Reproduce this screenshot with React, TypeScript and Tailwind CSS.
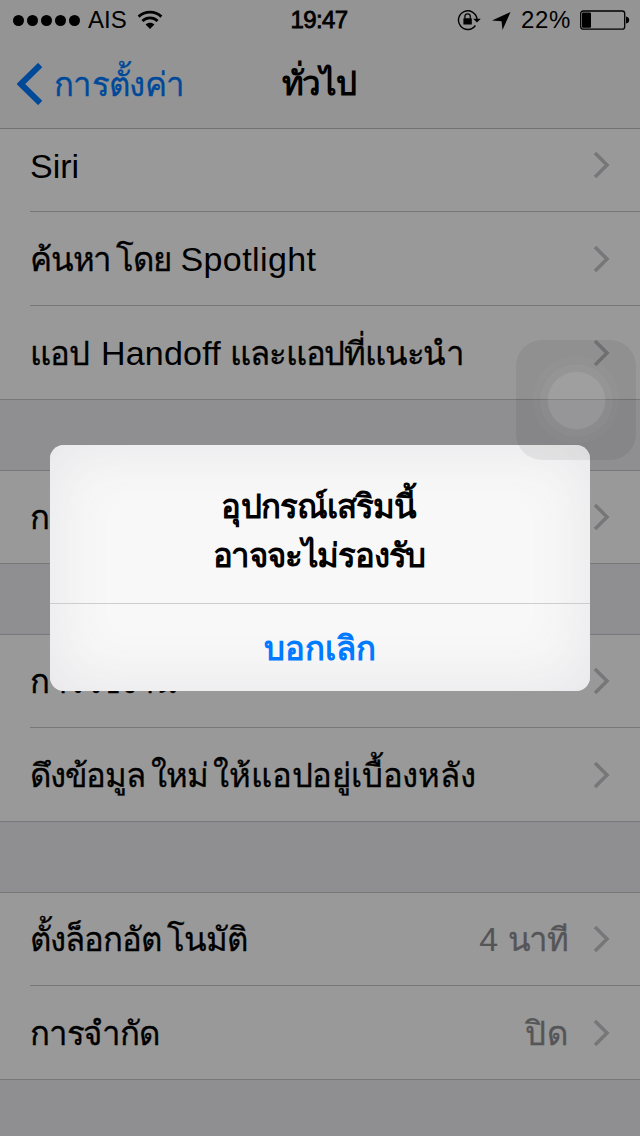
import React from 'react';

interface RowProps {
  label: React.ReactNode;
  value?: React.ReactNode;
  last?: boolean;
  className?: string;
}

// Thai copy runs slightly tighter and heavier than the Latin text next to it.
const Thai: React.FC<{ children: React.ReactNode; className?: string }> = ({ children, className = 'tracking-[-0.9px]' }) => (
  <span className={`text-[33px] [-webkit-text-stroke:0.3px] ${className}`}>{children}</span>
);

const ChevronRight: React.FC = () => (
  <svg width="18" height="28" viewBox="0 0 18 28" fill="none" className="shrink-0">
    <path d="M2 2L14 14L2 26" stroke="#c7c7cc" strokeWidth="3.6" />
  </svg>
);

const Row: React.FC<RowProps> = ({ label, value, last, className = 'h-[94px]' }) => (
  <div className={`flex pl-[30px] ${className}`}>
    <div className={`flex grow items-center pr-[29px] ${last ? '' : 'border-b border-[#c8c7cc]'}`}>
      <span className="grow whitespace-nowrap pt-px text-black">{label}</span>
      {value && <span className="mr-[25px] whitespace-nowrap pt-px text-[#8e8e93]">{value}</span>}
      <ChevronRight />
    </div>
  </div>
);

const Group: React.FC<{ children: React.ReactNode; first?: boolean }> = ({ children, first }) => (
  <section className={`border-b border-[#c8c7cc] bg-white ${first ? '' : 'mt-[70px] border-t'}`}>{children}</section>
);

const StatusBar: React.FC = () => (
  <div className="grid h-10 grid-cols-3 items-center pl-[13px] pr-[10px] text-[24px] leading-10">
    <div className="flex items-center">
      <div className="flex gap-[3px]">
        {[0, 1, 2, 3, 4].map((dot) => (
          <span key={dot} className="size-[11px] rounded-full bg-black" />
        ))}
      </div>
      <span className="ml-[8px] w-[39px]">AIS</span>
      <svg width="26" height="20" viewBox="0 0 26 20" fill="none" className="ml-[10px]">
        <path d="M1.6 6.6C8 .7 18 .7 24.4 6.6" stroke="#000" strokeWidth="2.8" />
        <path d="M5.4 11C9.8 6.9 16.2 6.9 20.6 11" stroke="#000" strokeWidth="2.8" />
        <path d="M13 19L8.600 14.400C11 12.300 15 12.300 17.400 14.400Z" fill="#000" />
      </svg>
    </div>
    <div className="pr-[5px] text-center tracking-[-0.6px] [-webkit-text-stroke:0.8px]">19:47</div>
    <div className="flex items-center justify-end">
      <svg width="24" height="22" viewBox="0 0 24 22" fill="none" className="shrink-0">
        <path d="M18.4 16.5A9.3 9.3 0 1 1 20 10" stroke="#000" strokeWidth="1.4" />
        <path d="M16.2 9.8H23.8L20 13.6Z" fill="#000" />
        <rect x="6.400" y="9.200" width="8.400" height="6.300" rx="0.500" fill="#000" />
        <path d="M7.9 9.5V7.5a2.7 2.7 0 0 1 5.4 0V9.5" stroke="#000" strokeWidth="1.3" />
      </svg>
      <svg width="19" height="18" viewBox="0 0 19 18" className="ml-[11px] mt-[2px] shrink-0">
        <path d="M18.5 0L10.5 18L9.6 9.300L0 8.600Z" fill="#000" />
      </svg>
      <span className="ml-[10px] w-[52px] whitespace-nowrap tracking-[0.6px]">22%</span>
      <svg width="50" height="20" viewBox="0 0 50 20" fill="none" className="ml-[7px] shrink-0">
        <rect x="0.7" y="1" width="44" height="18.2" rx="2.5" stroke="#000" strokeWidth="1.3" />
        <rect x="2" y="2.5" width="9" height="15.2" rx="1" fill="#000" />
        <path d="M46 6.500Q49.200 7 49.200 10T46 13.500Z" fill="#000" />
      </svg>
    </div>
  </div>
);

const Header: React.FC = () => (
  <header className="h-[129px] border-b border-[#bebec1] bg-[#f7f7f8]">
    <StatusBar />
    <div className="grid h-[88px] grid-cols-3 items-center">
      <div className="flex items-center pl-[17px] text-[#007aff]">
        <svg width="26" height="42" viewBox="0 0 26 42" fill="none" className="shrink-0">
          <path d="M23.2 2L3.8 21L23.2 40" stroke="currentColor" strokeWidth="6" />
        </svg>
        <Thai className="ml-[11px] pt-px whitespace-nowrap tracking-[-0.7px]">การตั้งค่า</Thai>
      </div>
      <h1 className="pr-[3px] text-center text-[33px] font-bold tracking-[-1.4px]">ทั่วไป</h1>
    </div>
  </header>
);

const AlertDialog: React.FC = () => (
  <div
    role="alertdialog"
    className="absolute left-[50px] top-[445px] flex h-[246px] w-[540px] flex-col overflow-hidden rounded-[14px] bg-[#f8f8f8] shadow-[inset_0_0_60px_4px_#e6e6e9]"
  >
    <div className="h-[159px] border-b border-[#cdcdd1] pr-[2px] pt-[37px] text-center text-[33px] font-bold leading-[49px] tracking-[-1.1px] text-black">
      <p className="tracking-[-0.9px]">อุปกรณ์เสริมนี้</p>
      <p className="tracking-[-1.2px]">อาจจะไม่รองรับ</p>
    </div>
    <button className="grow pt-[2px] pr-px text-[33px] font-bold text-[#007aff]">บอกเลิก</button>
  </div>
);

const AssistiveTouch: React.FC = () => (
  <div className="absolute left-[516px] top-[340px] flex size-[120px] items-center justify-center rounded-[26px] bg-black/[0.06]">
    <div className="flex size-[88px] items-center justify-center rounded-full bg-white/[0.02]">
      <div className="flex size-[75px] items-center justify-center rounded-full border border-black/[0.03] bg-white/[0.03]">
        <div className="size-[59px] rounded-full border border-black/[0.06] bg-white/[0.1]" />
      </div>
    </div>
  </div>
);

export default function App() {
  return (
    <div className="relative h-[1136px] w-[640px] overflow-hidden bg-[#efeff4] font-['Liberation_Sans',sans-serif] text-[34px] leading-[50px] text-black">
      <Header />
      <main>
        <Group first>
          <Row label="Siri" className="h-[83px] [&>div]:pb-[10px]" />
          <Row
            label={
              <>
                <Thai className="tracking-[-1.2px]">ค้นหา<span className="ml-[5px]">โดย</span></Thai>
                <span className="tracking-[0.4px]"> Spotlight</span>
              </>
            }
          />
          <Row
            label={
              <>
                <Thai>แอป</Thai>
                <span className="ml-[2px] tracking-[0.2px]"> Handoff </span>
                <Thai className="tracking-[-1.2px]">และแอปที่แนะนำ</Thai>
              </>
            }
            last
            className="h-[93px]"
          />
        </Group>
        <Group>
          <Row label={<Thai>การช่วยการเข้าถึง</Thai>} last className="h-[92px]" />
        </Group>
        <Group>
          <Row label={<Thai>การใช้งาน</Thai>} className="h-[93px]" />
          <Row
            label={
              <>
                <Thai className="tracking-[-1.2px]">ดึงข้อมูล</Thai>
                <Thai className="ml-[6px] tracking-[-0.8px]">ใหม่</Thai>
                <Thai className="ml-[5px] tracking-[-0.2px]">ให้แอปอยู่เบื้องหลัง</Thai>
              </>
            }
            last
            className="h-[93px]"
          />
        </Group>
        <Group>
          <Row
            label={<Thai className="tracking-[-1px]">ตั้งล็อกอัต<span className="ml-[6px]">โนมัติ</span></Thai>}
            value={<>4 <Thai className="tracking-[-1.2px]">นาที</Thai></>}
            className="h-[93px]"
          />
          <Row
            label={<Thai className="tracking-[-1.2px]">การจำกัด</Thai>}
            value={<Thai className="tracking-[0.3px]">ปิด</Thai>}
            last
            className="h-[93px]"
          />
        </Group>
      </main>

      {/* Dimming layer behind the alert */}
      <div className="absolute inset-0 bg-black/40" />
      <AlertDialog />
      <AssistiveTouch />
    </div>
  );
}
